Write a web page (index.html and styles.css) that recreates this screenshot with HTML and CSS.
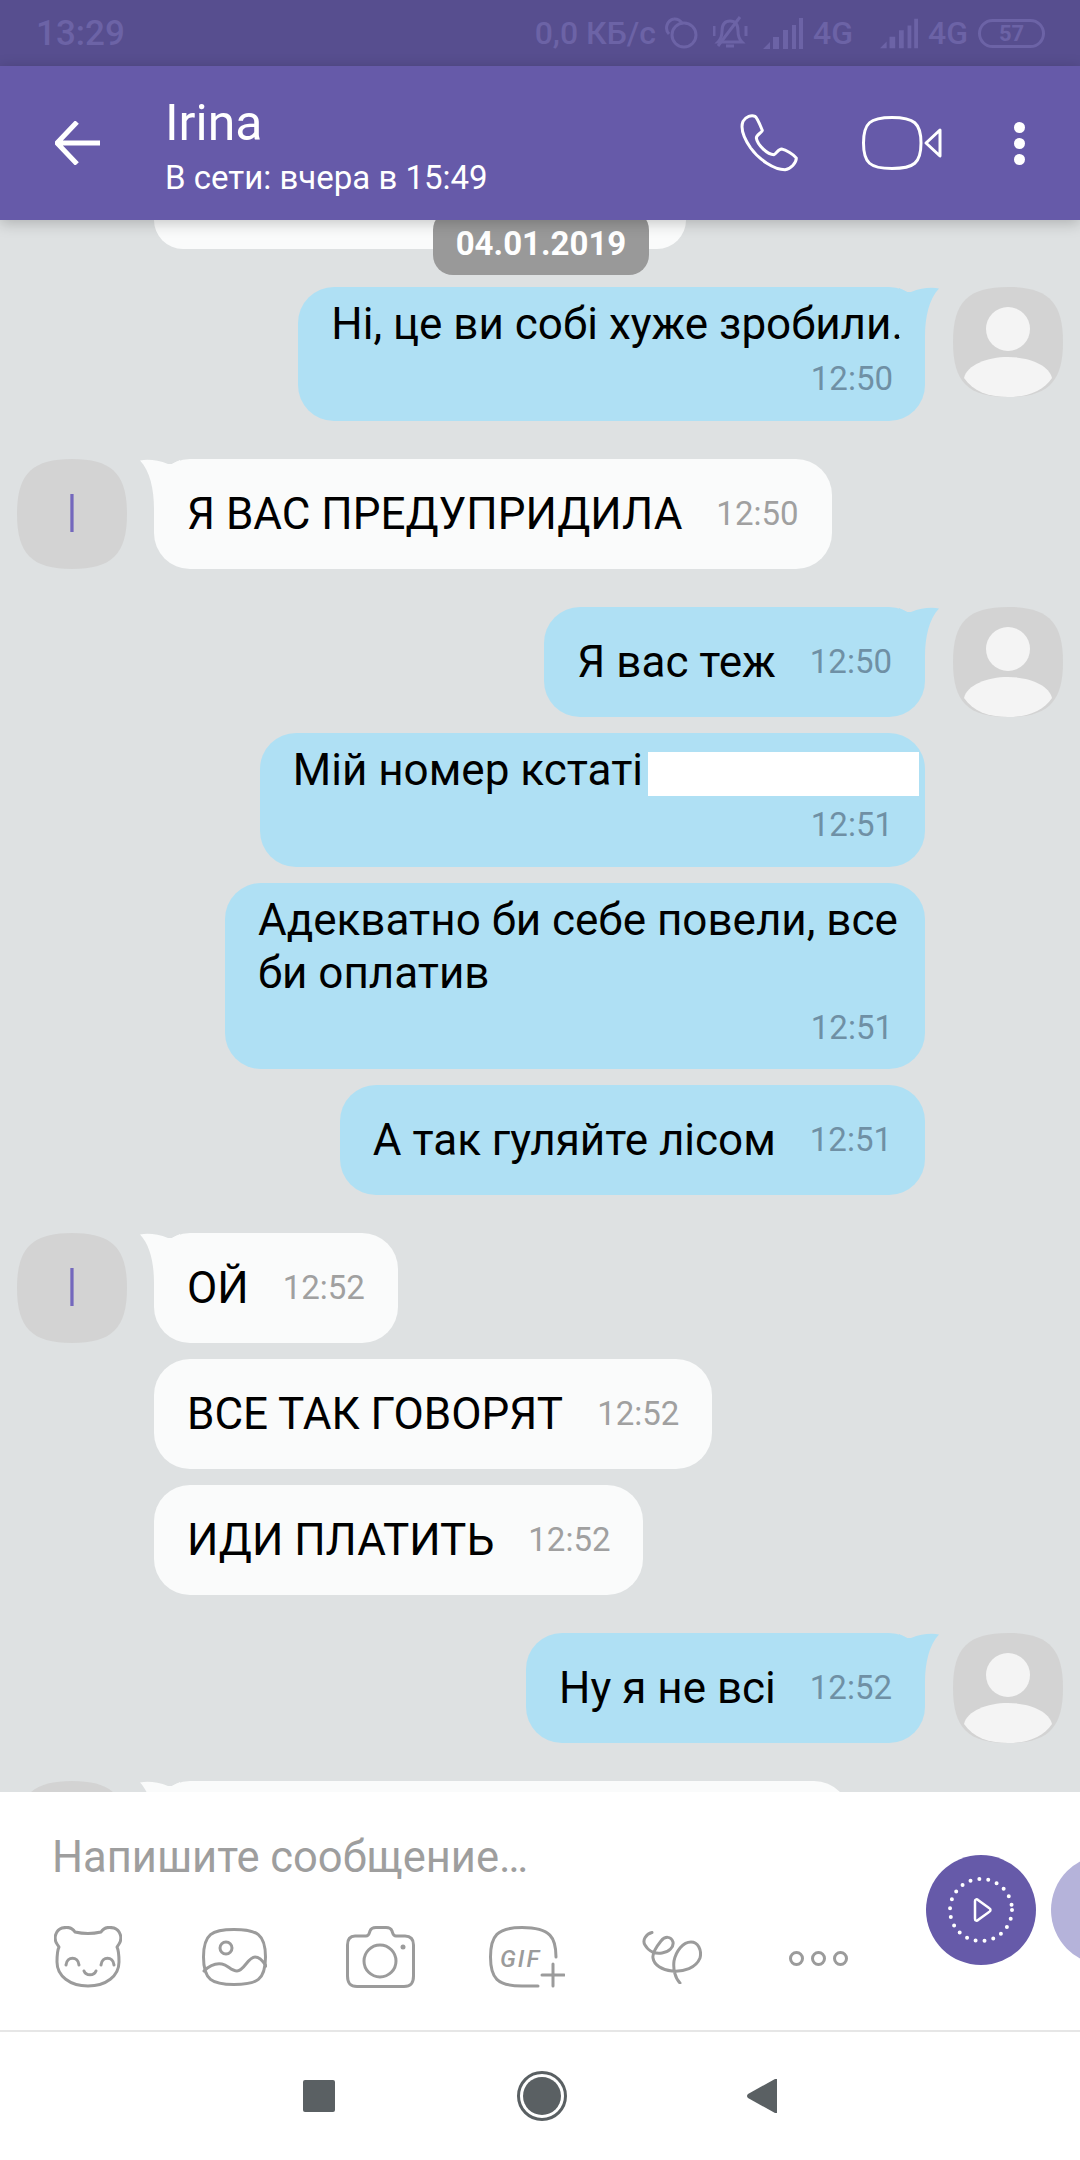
FILE: index.html
```html
<!DOCTYPE html>
<html>
<head>
    <title>Irina</title>
    <meta name="viewport" content="width=device-width, initial-scale=1">
    <link rel="stylesheet" href="styles.css">
</head>
<body>

<svg class="defs" width="0" height="0">
    <symbol id="person" viewBox="0 0 110 110">
        <circle cx="55" cy="42" r="22"></circle>
        <path d="M11 91 C14 78 34 70 55 70 C76 70 96 78 99 91 C90 104 75 110 55 110 C35 110 20 104 11 91Z"></path>
    </symbol>
    <symbol id="signal" viewBox="0 0 40 32">
        <path d="M0 32 L7 25 V32Z M10 20 h6 V32 h-6Z M20 13 h5 V32 h-5Z M29 8 h4 V32 h-4Z M36 1 h4 V32 h-4Z"></path>
    </symbol>
</svg>

<div id="page-wrapper">

    <div id="status-bar">
        <div class="status-time">13:29</div>
        <div class="status-right">
            <span class="status-speed">0,0 КБ/с</span>
            <svg class="status-rings" width="34" height="32" viewBox="0 0 34 32">
                <path d="M10 2 A9 9 0 0 0 5 17"></path>
                <path d="M10 2 A9 9 0 0 1 18 6"></path>
                <circle cx="20" cy="18" r="12"></circle>
            </svg>
            <svg class="status-rings" width="35" height="34" viewBox="0 0 35 34">
                <path d="M17 5 C10 5 9 10 9 15 C9 20 8 23 5 26 H29 C26 23 25 20 25 15 C25 10 24 5 17 5Z"></path>
                <path d="M13 30 H21"></path>
                <path d="M5 30 L27 1"></path>
                <path d="M1 10 V20 M33 10 V20"></path>
            </svg>
            <svg class="status-signal" width="40" height="32"><use href="#signal"></use></svg>
            <span class="status-net">4G</span>
            <svg class="status-signal signal-second" width="38" height="32"><use href="#signal"></use></svg>
            <span class="status-net">4G</span>
            <div class="status-battery">57</div>
        </div>
    </div>

    <div id="toolbar">
        <svg class="toolbar-back" width="46" height="44" viewBox="0 0 46 44">
            <path d="M2 22 H45 M22 1 L2 22 L22 43"></path>
        </svg>
        <div class="toolbar-title">
            <div class="toolbar-name">Irina</div>
            <div class="toolbar-seen">В сети: вчера в 15:49</div>
        </div>
        <svg class="toolbar-icon icon-phone" width="60" height="60" viewBox="60 40 180 180">
            <path d="M72 65 C80 50 98 45 108 50 C115 55 125 80 130 92 C128 100 112 105 112 115 C115 135 145 165 165 165 C172 162 178 148 188 148 C200 150 225 165 232 175 C232 190 215 208 198 210 C165 210 120 180 95 145 C78 120 62 90 72 65Z"></path>
        </svg>
        <svg class="toolbar-icon icon-video" width="80" height="54" viewBox="0 0 80 54">
            <path d="M30 1.5 C52 1.5 59 7 59 27 C59 47 52 52.5 30 52.5 C8 52.5 1.5 47 1.5 27 C1.5 7 8 1.5 30 1.5Z"></path>
            <path d="M78 14 L64 27 L78 40Z"></path>
        </svg>
        <div class="toolbar-more">
            <span class="more-dot"></span>
            <span class="more-dot"></span>
            <span class="more-dot"></span>
        </div>
    </div>

    <div id="chat">
        <div class="date-pill">04.01.2019</div>

        <div class="row row-in row-first">
            <div class="avatar-gap"></div>
            <div class="bubble bubble-in bubble-clipped"></div>
        </div>

        <div class="row row-out group-start">
            <div class="bubble bubble-out tail stacked">
                <div class="msg-text">Ні, це ви собі хуже зробили.</div>
                <div class="msg-time">12:50</div>
            </div>
            <div class="avatar"><svg class="avatar-person" width="110" height="110"><use href="#person"></use></svg></div>
        </div>

        <div class="row row-in group-start">
            <div class="avatar"><span class="avatar-letter">I</span></div>
            <div class="bubble bubble-in tail inline">
                <div class="msg-text">Я ВАС ПРЕДУПРИДИЛА</div>
                <div class="msg-time">12:50</div>
            </div>
        </div>

        <div class="row row-out group-start">
            <div class="bubble bubble-out tail inline">
                <div class="msg-text">Я вас теж</div>
                <div class="msg-time">12:50</div>
            </div>
            <div class="avatar"><svg class="avatar-person" width="110" height="110"><use href="#person"></use></svg></div>
        </div>

        <div class="row row-out">
            <div class="bubble bubble-out stacked">
                <div class="msg-text">Мій номер кстаті<span class="redacted"></span></div>
                <div class="msg-time">12:51</div>
            </div>
            <div class="avatar-gap"></div>
        </div>

        <div class="row row-out">
            <div class="bubble bubble-out stacked wide">
                <div class="msg-text">Адекватно би себе повели, все би оплатив</div>
                <div class="msg-time">12:51</div>
            </div>
            <div class="avatar-gap"></div>
        </div>

        <div class="row row-out">
            <div class="bubble bubble-out inline">
                <div class="msg-text">А так гуляйте лісом</div>
                <div class="msg-time">12:51</div>
            </div>
            <div class="avatar-gap"></div>
        </div>

        <div class="row row-in group-start">
            <div class="avatar"><span class="avatar-letter">I</span></div>
            <div class="bubble bubble-in tail inline">
                <div class="msg-text">ОЙ</div>
                <div class="msg-time">12:52</div>
            </div>
        </div>

        <div class="row row-in">
            <div class="avatar-gap"></div>
            <div class="bubble bubble-in inline">
                <div class="msg-text">ВСЕ ТАК ГОВОРЯТ</div>
                <div class="msg-time">12:52</div>
            </div>
        </div>

        <div class="row row-in">
            <div class="avatar-gap"></div>
            <div class="bubble bubble-in inline">
                <div class="msg-text">ИДИ ПЛАТИТЬ</div>
                <div class="msg-time">12:52</div>
            </div>
        </div>

        <div class="row row-out group-start">
            <div class="bubble bubble-out tail inline">
                <div class="msg-text">Ну я не всі</div>
                <div class="msg-time">12:52</div>
            </div>
            <div class="avatar"><svg class="avatar-person" width="110" height="110"><use href="#person"></use></svg></div>
        </div>

        <div class="row row-in group-start">
            <div class="avatar"></div>
            <div class="bubble bubble-in tail bubble-peek"></div>
        </div>
    </div>

    <div id="composer">
        <div class="composer-left">
            <div class="composer-input">Напишите сообщение…</div>
            <div class="composer-icons">
                <svg class="line-icon" width="68" height="62" viewBox="0 0 68 62">
                    <path d="M21 6 Q34 9 47 6 C50 1 56 1 60 2 C66 4 69 12 65 18 L63 21 C65 25 65 30 65 36 C65 50 52 60 34 60 C16 60 3 50 3 36 C3 30 3 25 5 21 L3 18 C-1 12 2 4 8 2 C12 1 18 1 21 6Z"></path>
                    <path d="M12 39 C13 30 24 30 25 39"></path>
                    <path d="M47 39 C48 30 59 30 60 39"></path>
                    <path d="M30 45 C32 50 40 50 42 45"></path>
                </svg>
                <svg class="line-icon" width="65" height="58" viewBox="0 0 65 58">
                    <path d="M32 1.5 C55 1.5 63.5 6 63.5 29 C63.5 52 55 56.5 32 56.5 C10 56.5 1.5 52 1.5 29 C1.5 6 10 1.5 32 1.5Z"></path>
                    <circle cx="24" cy="20" r="6"></circle>
                    <path d="M2 43 C8 37 14 35 20 36 C26 37 29 43 35 43 C42 43 46 29 53 29 C57 29 61 33 64 38"></path>
                </svg>
                <svg class="line-icon" width="69" height="62" viewBox="0 0 69 62">
                    <path d="M9 10 H20 C23 10 23 8 24 5 C25 2 27 1.5 30 1.5 H40 C43 1.5 45 2 46 5 C47 8 47 10 50 10 H59 C65 10 67.5 13 67.5 19 V50 C67.5 57 65 60.5 58 60.5 H11 C4 60.5 1.5 57 1.5 50 V19 C1.5 13 4 10 9 10Z"></path>
                    <circle cx="34" cy="35" r="16"></circle>
                    <circle class="icon-fill" cx="57" cy="21" r="2.5"></circle>
                </svg>
                <svg class="line-icon" width="76" height="62" viewBox="0 0 76 62">
                    <path d="M67 31 C67 12 62 1.5 33 1.5 C8 1.5 1.5 10 1.5 31 C1.5 52 8 60 33 60 H49"></path>
                    <text class="gif-label" x="11" y="41">GIF</text>
                    <path d="M53 49 H75 M64 38 V60"></path>
                </svg>
                <svg class="line-icon" width="60" height="53" viewBox="0 0 60 53">
                    <path d="M10 1.5 C4 3 0 9 3 14 C7 21 14 23 20 22 C27 21 32 16 31 11 C29 5 23 5 19 10 C15 15 10 22 11 27 C12 34 20 39 30 40 C42 41 54 37 58 27 C60 19 56 11 49 11 C41 11 34 20 32 30 C31 38 33 47 38 52"></path>
                </svg>
                <svg class="line-icon icon-more" width="59" height="15" viewBox="0 0 59 15">
                    <circle cx="7.5" cy="7.5" r="6"></circle>
                    <circle cx="29.5" cy="7.5" r="6"></circle>
                    <circle cx="51.5" cy="7.5" r="6"></circle>
                </svg>
            </div>
        </div>
        <div class="composer-buttons">
            <div class="round-button round-primary">
                <svg width="70" height="70" viewBox="0 0 70 70">
                    <circle class="video-ring" cx="35" cy="35" r="31"></circle>
                    <path class="video-play" d="M29 26 C29 24 31 24 32 25 L43 33 C45 34 45 36 43 37 L32 45 C31 46 29 46 29 44Z"></path>
                </svg>
            </div>
            <div class="round-button round-secondary"></div>
        </div>
    </div>

    <div id="nav-bar">
        <div class="nav-square"></div>
        <div class="nav-home"><div class="nav-home-dot"></div></div>
        <svg class="nav-back-icon" width="32" height="36" viewBox="0 0 32 36">
            <path class="nav-back" d="M31 1 V35 L29 35 L2 20 Q0 18 2 16 L29 1Z"></path>
        </svg>
    </div>

</div>

</body>
</html>
```

FILE: styles.css
```css
html, body {
    margin: 0px;
    padding: 0px;
    background-color: #dee1e2;
}

.defs {
    position: absolute;
}

#page-wrapper {
    width: 1080px;
    height: 2160px;
    display: flex;
    flex-direction: column;
    overflow: hidden;
    font-family: "Roboto", "Liberation Sans", sans-serif;
}

/* status bar */
#status-bar {
    height: 66px;
    flex: none;
    padding: 0px 35px 0px 36px;
    display: flex;
    justify-content: space-between;
    align-items: center;
    background-color: #574e8f;
    color: #6c63a6;
    font-size: 35px;
    font-weight: 500;
}

.status-right {
    display: flex;
    align-items: center;
}

.status-speed {
    font-size: 32px;
    margin-right: 8px;
}

.status-rings {
    margin-right: 15px;
    fill: none;
    stroke: #6c63a6;
    stroke-width: 3;
}

.status-signal {
    fill: #6c63a6;
    margin-right: 10px;
}

.signal-second {
    margin-left: 27px;
}

.status-net {
    font-size: 32px;
}

.status-battery {
    width: 67px;
    height: 29px;
    margin-left: 10px;
    box-sizing: border-box;
    border: 3px solid #6c63a6;
    border-radius: 15px;
    font-size: 22px;
    font-weight: 700;
    line-height: 23px;
    text-align: center;
}

/* purple bar */
#toolbar {
    height: 154px;
    flex: none;
    position: relative;
    z-index: 2;
    display: flex;
    align-items: center;
    padding-left: 55px;
    background-color: #665aa9;
    box-shadow: 0px 3px 14px rgba(0, 0, 0, 0.22);
    color: #ffffff;
}

.toolbar-back {
    fill: none;
    stroke: #ffffff;
    stroke-width: 5;
    flex: none;
}

.toolbar-title {
    margin-left: 64px;
    align-self: flex-start;
    padding-top: 29px;
}

.toolbar-name {
    font-size: 50px;
    line-height: 56px;
}

.toolbar-seen {
    margin-top: 5px;
    font-size: 33px;
    line-height: 44px;
}

.toolbar-icon {
    flex: none;
    fill: none;
    stroke: #ffffff;
    stroke-width: 3;
    stroke-linejoin: round;
}

.icon-phone {
    margin-left: auto;
    stroke-width: 9;
}

.icon-video {
    margin-left: 63px;
}

.toolbar-more {
    margin-left: 72px;
    margin-right: 55px;
    width: 11px;
    display: flex;
    flex-direction: column;
    gap: 5px;
}

.more-dot {
    width: 11px;
    height: 11px;
    border-radius: 50%;
    background-color: #ffffff;
}

/* chat */
#chat {
    flex: 1;
    min-height: 0px;
    position: relative;
    overflow: hidden;
    background-color: #dee1e2;
}

.date-pill {
    position: absolute;
    z-index: 1;
    top: -10px;
    left: 433px;
    width: 216px;
    height: 65px;
    border-radius: 20px;
    background-color: #999999;
    color: #ffffff;
    font-size: 33px;
    font-weight: 700;
    line-height: 67px;
    text-align: center;
}

.row {
    display: flex;
    gap: 27px;
    padding: 0px 17px;
    margin-top: 16px;
    align-items: flex-start;
}

.row-first {
    margin-top: 0px;
}

.row-out {
    justify-content: flex-end;
    gap: 28px;
}

.group-start {
    margin-top: 38px;
}

.avatar-gap {
    width: 110px;
    flex: none;
}

.avatar {
    width: 110px;
    height: 110px;
    flex: none;
    display: flex;
    align-items: center;
    justify-content: center;
    background-color: #d3d3d3;
    clip-path: path("M55 0 C95 0 110 15 110 55 C110 95 95 110 55 110 C15 110 0 95 0 55 C0 15 15 0 55 0Z");
}

.avatar-person {
    fill: #f4f4f4;
}

.avatar-letter {
    color: #7468bd;
    font-size: 54px;
    font-weight: 300;
    line-height: 110px;
}

.bubble {
    position: relative;
    box-sizing: border-box;
    border-radius: 36px;
    padding: 0px 33px;
    color: #000000;
}

.bubble-in {
    background-color: #fafbfb;
}

.bubble-out {
    background-color: #afe0f4;
}

.bubble-clipped {
    width: 532px;
    height: 29px;
    border-radius: 0px 0px 36px 36px;
}

.bubble-peek {
    width: 696px;
    height: 110px;
}

.inline {
    height: 110px;
    display: flex;
    align-items: center;
    gap: 34px;
}

.stacked {
    padding: 11px 22px 15px 33px;
}

.wide {
    max-width: 700px;
    padding-bottom: 14px;
}

.msg-text {
    font-size: 44px;
    line-height: 53px;
}

.msg-time {
    font-size: 33px;
    line-height: 54px;
    flex: none;
}

.stacked .msg-time {
    margin-top: 1px;
    margin-right: 10px;
    text-align: right;
}

.bubble-out .msg-time {
    color: #6f90a5;
}

.bubble-in .msg-time {
    color: #a0a0a0;
}

.redacted {
    display: inline-block;
    width: 271px;
    height: 44px;
    margin-left: 5px;
    margin-right: -16px;
    vertical-align: -11px;
    background-color: #ffffff;
}

.tail::before {
    content: "";
    position: absolute;
    top: 0px;
    width: 40px;
    height: 50px;
    background-color: inherit;
    clip-path: path("M0 1.5 C8 0 18 1 28 5 L32 5 L40 1 L40 50 L14 50 C14 30 10 12 0 1.5Z");
}

.bubble-in.tail::before {
    left: -14px;
}

.bubble-out.tail::before {
    right: -14px;
    transform: scaleX(-1);
}

/* message box */
#composer {
    height: 238px;
    flex: none;
    position: relative;
    z-index: 2;
    display: flex;
    overflow: hidden;
    background-color: #ffffff;
}

.composer-left {
    width: 926px;
    flex: none;
    box-sizing: border-box;
    padding: 40px 0px 0px 52px;
}

.composer-input {
    font-size: 43.5px;
    line-height: 52px;
    color: #9e9e9e;
}

.composer-icons {
    margin-top: 42px;
    margin-left: 2px;
    display: grid;
    grid-template-columns: 148px 144px 143px 153px 147px auto;
    align-items: center;
}

.line-icon {
    fill: none;
    stroke: #9b9b9b;
    stroke-width: 3;
    stroke-linecap: round;
    stroke-linejoin: round;
}

.icon-more {
    margin-top: 2px;
}

.line-icon .icon-fill {
    fill: #9b9b9b;
    stroke: none;
}

.line-icon .gif-label {
    fill: #9b9b9b;
    stroke: none;
    font-family: "Roboto", "Liberation Sans", sans-serif;
    font-size: 24px;
    font-weight: 500;
    font-style: italic;
    letter-spacing: 2px;
}

.composer-buttons {
    display: flex;
    flex: none;
    gap: 15px;
    padding-top: 63px;
}

.round-button {
    width: 110px;
    height: 110px;
    border-radius: 50%;
    display: flex;
    align-items: center;
    justify-content: center;
}

.round-primary {
    background-color: #665aa9;
}

.round-secondary {
    background-color: #b5b3da;
}

.video-ring {
    fill: none;
    stroke: #ffffff;
    stroke-width: 4;
    stroke-linecap: round;
    stroke-dasharray: 0 9.01;
}

.video-play {
    fill: none;
    stroke: #ffffff;
    stroke-width: 2.5;
}

/* system nav */
#nav-bar {
    height: 130px;
    flex: none;
    box-sizing: border-box;
    display: flex;
    justify-content: center;
    align-items: center;
    gap: 182px;
    border-top: 2px solid #e6e6e6;
    background-color: #ffffff;
}

.nav-square {
    width: 32px;
    height: 32px;
    border-radius: 2px;
    background-color: #5a6063;
}

.nav-home {
    width: 50px;
    height: 50px;
    box-sizing: border-box;
    border: 3px solid #5a6063;
    border-radius: 50%;
    padding: 3px;
}

.nav-home-dot {
    width: 100%;
    height: 100%;
    border-radius: 50%;
    background-color: #5a6063;
}

.nav-back-icon {
    margin-left: -3px;
}

.nav-back {
    fill: #5a6063;
}
```
